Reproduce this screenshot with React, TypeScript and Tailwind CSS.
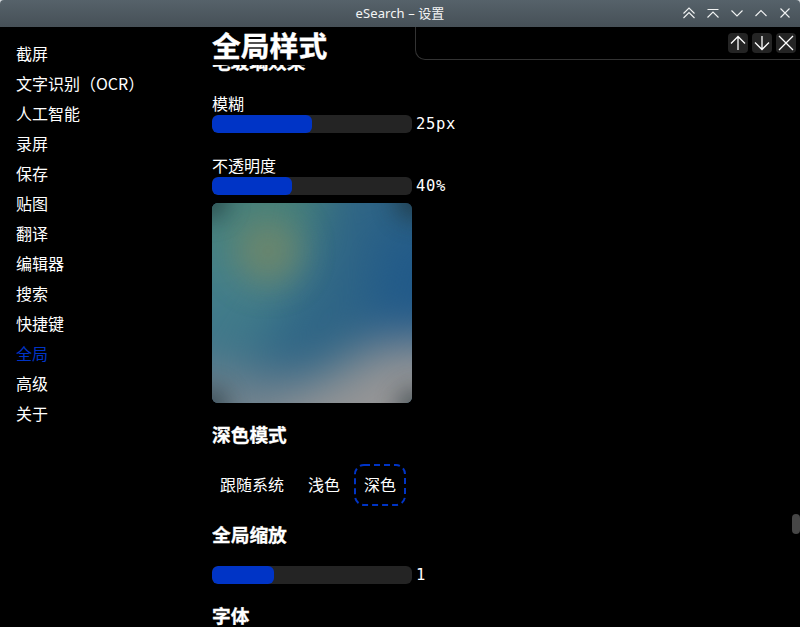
import type { ReactNode } from "react";

const NAV_ITEMS = [
  "截屏",
  "文字识别（OCR）",
  "人工智能",
  "录屏",
  "保存",
  "贴图",
  "翻译",
  "编辑器",
  "搜索",
  "快捷键",
  "全局",
  "高级",
  "关于",
];

function TitleBar() {
  return (
    <header className="relative flex h-[27px] shrink-0 items-center justify-center rounded-t-[4px] bg-linear-to-b from-[#56626a] to-[#465057]">
      <span className="font-['Noto_Sans','Noto_Sans_CJK_SC',sans-serif] text-[13px] leading-none tracking-[0.1px] text-[#f4f5f5]">
        eSearch – 设置
      </span>
      <svg
        className="absolute top-0 right-0"
        width="124"
        height="27"
        fill="none"
        stroke="#f2f3f3"
        strokeWidth="1.1"
      >
        <path d="M7.5 13.5l5.5-5.5 5.5 5.5M7.5 18l5.5-5.5 5.5 5.5" />
        <path d="M31.5 9.5h11M31.5 17.5l5.5-5.5 5.5 5.5" />
        <path d="M55.5 10.5l5.5 5.5 5.5-5.5" />
        <path d="M79.5 16l5.5-5.5 5.5 5.5" />
        <path d="M104.5 8.5l9 9M113.5 8.5l-9 9" />
      </svg>
    </header>
  );
}

function ToolButton({ label, children }: { label: string; children: ReactNode }) {
  return (
    <button aria-label={label} className="flex size-5 items-center justify-center rounded-[4px] bg-[#242424]">
      <svg width="20" height="20" fill="none" stroke="#fff" strokeWidth="1.3">
        {children}
      </svg>
    </button>
  );
}

function FindBar() {
  return (
    <div className="absolute top-0 right-0 flex h-[33px] w-[385px] items-center justify-end gap-1 rounded-bl-[10px] border-b border-l border-[#333] bg-black pr-1">
      <ToolButton label="上一个">
        <path d="M10 17V3.5M3 10.5l7-7 7 7" />
      </ToolButton>
      <ToolButton label="下一个">
        <path d="M10 3v13.5M3 9.5l7 7 7-7" />
      </ToolButton>
      <ToolButton label="关闭">
        <path d="M3 3l14 14M17 3L3 17" />
      </ToolButton>
    </div>
  );
}

function Slider({ percent, value }: { percent: number; value: string }) {
  return (
    <div className="flex h-[18px] items-center gap-1">
      <div className="h-[18px] w-[200px] overflow-hidden rounded-[6px] bg-[#242424]">
        <div className="h-full rounded-[6px] bg-[#0034c6]" style={{ width: `${percent}%` }} />
      </div>
      <span className="pt-0.5 font-['DejaVu_Sans_Mono',monospace] text-[15.5px] leading-none tracking-[0.65px]">
        {value}
      </span>
    </div>
  );
}

function Heading({ children }: { children: ReactNode }) {
  return (
    <h3 className="h-7 text-[18.72px] leading-[26px] font-bold [-webkit-text-stroke:0.3px_#fff]">{children}</h3>
  );
}

function GlassPreview() {
  return (
    <div className="relative mt-2 size-[200px] overflow-hidden rounded-[6px] bg-[#2f6586]">
      <svg width="200" height="200" className="block" colorInterpolationFilters="sRGB">
        <defs>
          <linearGradient id="teal" gradientUnits="userSpaceOnUse" x1="0" y1="0" x2="0" y2="160">
            <stop offset="0" stopColor="#468078" />
            <stop offset=".4" stopColor="#458189" />
            <stop offset="1" stopColor="#3d748a" />
          </linearGradient>
          <filter id="soft" x="-50%" y="-50%" width="200%" height="200%">
            <feGaussianBlur stdDeviation="24" />
          </filter>
          <filter id="spot" x="-100%" y="-100%" width="300%" height="300%">
            <feGaussianBlur stdDeviation="17" />
          </filter>
          <filter id="corner" x="-100%" y="-100%" width="300%" height="300%">
            <feGaussianBlur stdDeviation="12" />
          </filter>
        </defs>
        <g filter="url(#soft)">
          <path d="M-90-90H132L98 65L40 165H-90Z" fill="url(#teal)" />
          <path d="M170 20H290V150H150Z" fill="#20588a" opacity=".85" />
          <path d="M-90 158L10 166L90 180L125 165L165 137H290V290H-90Z" fill="#72828d" />
          <path d="M60 208L120 172L175 142H290V280H60Z" fill="#959596" />
        </g>
        <circle cx="56" cy="48" r="33" fill="#70876a" opacity=".88" filter="url(#spot)" />
        <g filter="url(#corner)" fill="#1c2c32" opacity=".65">
          <circle cx="-3" cy="-3" r="18" />
          <circle cx="203" cy="-3" r="20" />
          <circle cx="-3" cy="203" r="18" />
          <circle cx="203" cy="203" r="17" />
        </g>
      </svg>
    </div>
  );
}

export default function App() {
  return (
    <div className="h-[627px] w-[800px] bg-[#d5dadd]">
      <div className="flex h-full flex-col overflow-hidden font-['Noto_Sans_CJK_SC',sans-serif] text-base text-white">
        <TitleBar />
        <div className="relative flex min-h-0 flex-1 bg-black">
          <nav className="w-[212px] shrink-0 pt-[11px] pl-4">
            <ul>
              {NAV_ITEMS.map((item) => (
                <li key={item} className={`h-[30px] leading-[30px] ${item === "全局" ? "text-[#0034c6]" : ""}`}>
                  {item}
                </li>
              ))}
            </ul>
          </nav>
          <main className="flex min-w-0 flex-1 flex-col">
            <h1 className="h-[38px] shrink-0 text-[28.8px] leading-[36px] font-bold [-webkit-text-stroke:0.4px_#fff]">
              全局样式
            </h1>
            <section className="min-h-0 flex-1 overflow-hidden">
              <div className="-mt-[17px]">
                <Heading>毛玻璃效果</Heading>
                <p className="mt-[17px] h-[22px] leading-[20px]">模糊</p>
                <Slider percent={50} value="25px" />
                <p className="mt-[22px] h-[22px] leading-[20px]">不透明度</p>
                <Slider percent={40} value="40%" />
                <GlassPreview />
                <div className="mt-[18px]">
                  <Heading>深色模式</Heading>
                </div>
                <div className="mt-[15px] flex h-[42px] items-center leading-none">
                  <span className="px-2 pb-0.5">跟随系统</span>
                  <span className="ml-2 px-2 pb-0.5">浅色</span>
                  <span className="relative ml-1.5 flex h-[42px] w-[52px] items-center justify-center pb-0.5">
                    <svg className="absolute inset-0" width="52" height="42" fill="none">
                      <rect
                        x="1"
                        y="1"
                        width="50"
                        height="40"
                        rx="9"
                        stroke="#0034c6"
                        strokeWidth="2"
                        strokeDasharray="6 4"
                      />
                    </svg>
                    深色
                  </span>
                </div>
                <div className="mt-[15px]">
                  <Heading>全局缩放</Heading>
                </div>
                <div className="mt-[17px]">
                  <Slider percent={31} value="1" />
                </div>
                <div className="mt-[18px]">
                  <Heading>字体</Heading>
                </div>
              </div>
            </section>
          </main>
          <FindBar />
          <div className="absolute top-[487px] right-0 h-5 w-2 rounded-full bg-[#464646]" />
        </div>
      </div>
    </div>
  );
}
